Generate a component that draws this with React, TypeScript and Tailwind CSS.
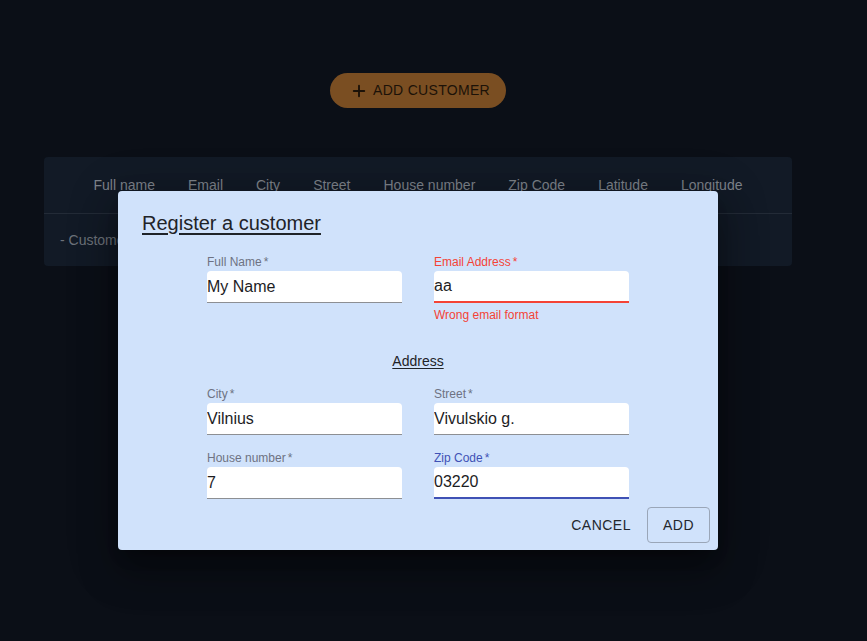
import { Plus } from "lucide-react";

const columns = ["Full name", "Email", "City", "Street", "House number", "Zip Code", "Latitude", "Longitude"];

type FieldProps = {
  label: string;
  value: string;
  state?: "error" | "focus";
  helper?: string;
};

function Field({ label, value, state, helper }: FieldProps) {
  const labelColor =
    state === "error" ? "text-[#f44336]" : state === "focus" ? "text-[#3f51b5]" : "text-[#6e7282]";
  const border =
    state === "error"
      ? "border-b-2 border-[#f44336]"
      : state === "focus"
        ? "border-b-2 border-[#3f51b5]"
        : "border-b border-[#8d8f93]";
  return (
    <div className="flex flex-col">
      <label className={`text-[12px] leading-[16px] ${labelColor}`}>
        {label}
        <span className="ml-[2px]">*</span>
      </label>
      <div className={`mt-px h-[32px] bg-white rounded-t-[4px] flex items-center ${border}`}>
        <input
          defaultValue={value}
          className="w-full bg-transparent text-[16px] text-[#1d1d1f] outline-none p-0"
        />
      </div>
      {helper && <p className="mt-[4px] text-[12px] leading-[16px] text-[#f44336]">{helper}</p>}
    </div>
  );
}

export default function App() {
  return (
    <div className="relative min-h-screen bg-[#0b0f17] [font-family:'Liberation_Sans',Arial,sans-serif]">
      <div className="w-[836px] flex flex-col items-center pt-[73px]">
        <button className="flex items-center gap-[5px] h-[35px] pl-[20px] pr-[16px] rounded-full bg-[#7a4e22] text-[#1c1208] text-[14px] tracking-[0.3px] uppercase">
          <Plus className="w-[18px] h-[18px]" strokeWidth={2.5} />
          Add customer
        </button>

        <div className="mt-[49px] w-[748px] rounded-[4px] bg-[#121a26]">
          <div className="h-[57px] flex items-center justify-center gap-[33px] border-b border-[#232b37] text-[14px] text-[#7e838b]">
            {columns.map((c) => (
              <span key={c}>{c}</span>
            ))}
          </div>
          <div className="h-[52px] flex items-center px-4 text-[14px] text-[#6d727a]">- Customer list is empty -</div>
        </div>
      </div>

      {/* modal */}
      <div className="absolute left-[118px] top-[191px] w-[600px] h-[359px] rounded-[4px] bg-[#d0e2fb] shadow-[0_11px_15px_-7px_rgba(0,0,0,0.3),0_24px_38px_3px_rgba(0,0,0,0.24),0_9px_46px_8px_rgba(0,0,0,0.2)] flex flex-col">
        <h2 className="pt-4 px-6 text-[20px] leading-[32px] text-[#1f2328] underline underline-offset-[3px] decoration-[1.5px]">
          Register a customer
        </h2>
        <div className="mt-[15px] w-[422px] mx-auto grid grid-cols-2 gap-x-8">
          <Field label="Full Name" value="My Name" />
          <Field label="Email Address" value="aa" state="error" helper="Wrong email format" />
        </div>
        <div className="mt-[28px] text-center text-[14px] leading-[20px] text-[#1f2328] underline underline-offset-[2px]">
          Address
        </div>
        <div className="mt-[15px] w-[422px] mx-auto grid grid-cols-2 gap-x-8 gap-y-[15px]">
          <Field label="City" value="Vilnius" />
          <Field label="Street" value="Vivulskio g." />
          <Field label="House number" value="7" />
          <Field label="Zip Code" value="03220" state="focus" />
        </div>
        <div className="mt-[8px] flex justify-end items-center gap-2 px-2">
          <button className="h-[36px] px-2 text-[14px] tracking-[0.5px] text-[#23272d]">CANCEL</button>
          <button className="h-[36px] w-[63px] rounded-[4px] border border-[#9aa6b8] text-[14px] tracking-[0.5px] text-[#23272d]">
            ADD
          </button>
        </div>
      </div>
    </div>
  );
}
